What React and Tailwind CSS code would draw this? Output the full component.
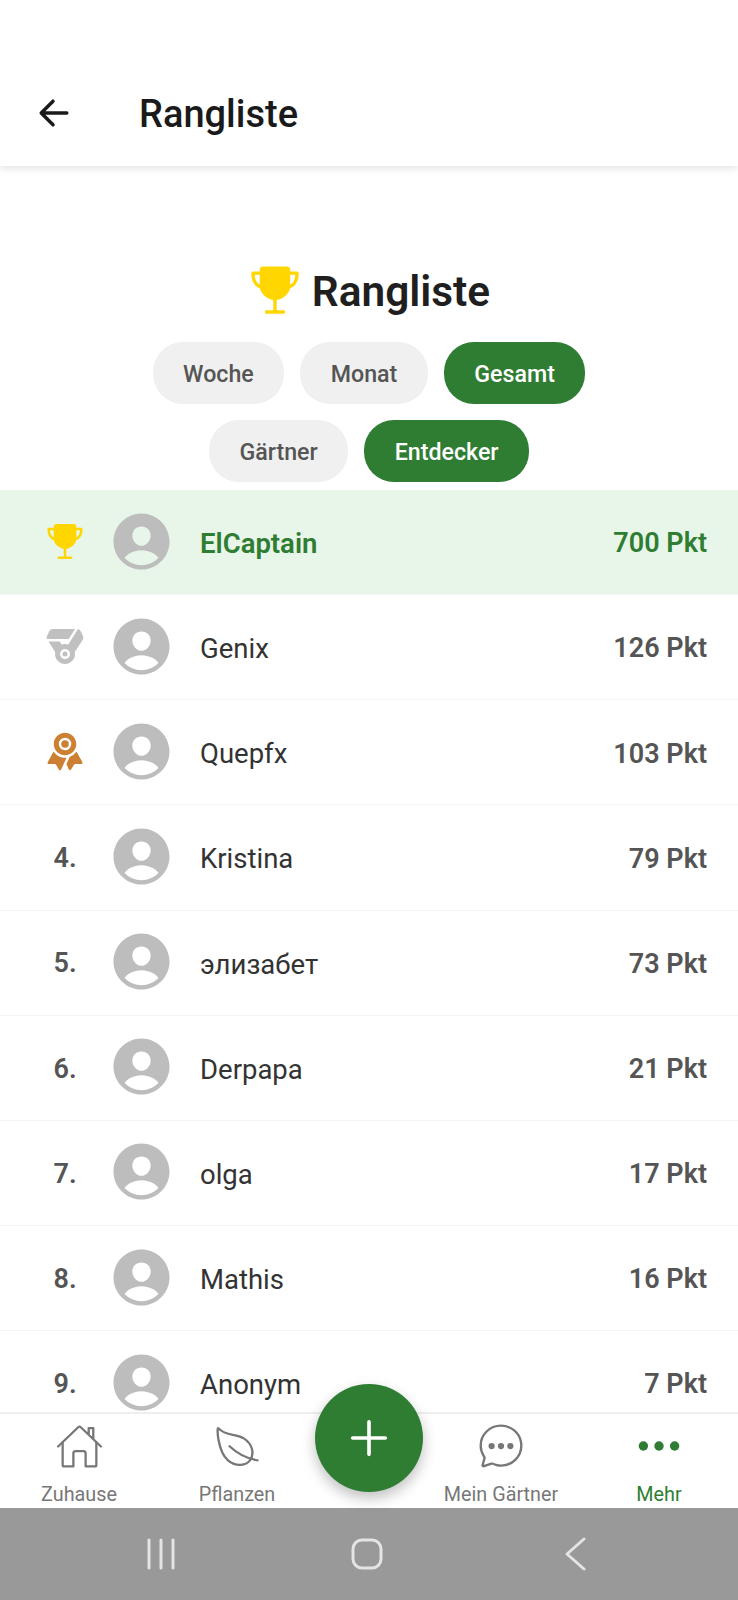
import React from "react";
import {
  IoArrowBack,
  IoTrophy,
  IoMedal,
  IoRibbon,
  IoPersonCircle,
  IoHomeOutline,
  IoLeafOutline,
  IoChatbubbleEllipsesOutline,
  IoEllipsisHorizontal,
  IoAdd,
} from "react-icons/io5";

const players = [
  { rank: 1, name: "ElCaptain", points: 700 },
  { rank: 2, name: "Genix", points: 126 },
  { rank: 3, name: "Quepfx", points: 103 },
  { rank: 4, name: "Kristina", points: 79 },
  { rank: 5, name: "элизабет", points: 73 },
  { rank: 6, name: "Derpapa", points: 21 },
  { rank: 7, name: "olga", points: 17 },
  { rank: 8, name: "Mathis", points: 16 },
  { rank: 9, name: "Anonym", points: 7 },
];

function Pill({ label, active }) {
  return (
    <button
      className={`h-[62px] px-[30.5px] pt-[3px] rounded-[30px] text-[23.2px] font-medium ${
        active ? "bg-[#2e7d32] text-white" : "bg-[#f0f0f0] text-[#555555]"
      }`}
    >
      {label}
    </button>
  );
}

function RankIcon({ rank }) {
  if (rank === 1) return <IoTrophy className="-mt-[2px] text-[#ffd600]" size={43} />;
  if (rank === 2) return <IoMedal className="-mt-[2px] text-[#c0c0c0]" size={43} />;
  if (rank === 3) return <IoRibbon className="-mt-[2px] text-[#cd7f32]" size={43} />;
  return <span className="pt-[2px] text-[27px] font-semibold text-[#555555]">{rank}.</span>;
}

function PlayerRow({ player }) {
  const first = player.rank === 1;
  return (
    <div
      className={`h-[105.15px] shrink-0 flex items-center pl-[45px] pr-[31px] border-b border-[#f3f3f3] ${
        first ? "bg-[#e8f5e9]" : "bg-white"
      }`}
    >
      <div className="w-[40px] flex justify-center">
        <RankIcon rank={player.rank} />
      </div>
      <IoPersonCircle className="ml-[22px] -mt-[2px] shrink-0 text-[#bdbdbd]" size={69} />
      <span
        className={`ml-[24px] flex-1 pt-[3px] text-[27.5px] ${
          first ? "font-semibold text-[#2e7d32]" : "text-[#333333]"
        }`}
      >
        {player.name}
      </span>
      <span className={`pt-[3px] text-[27px] font-semibold ${first ? "text-[#2e7d32]" : "text-[#555555]"}`}>
        {player.points} Pkt
      </span>
    </div>
  );
}

function NavItem({ icon, label, active }) {
  return (
    <div className="flex flex-col items-center">
      <div className="h-[64px] flex items-center justify-center">{icon}</div>
      <span
        className={`mt-[5px] text-[19.8px] leading-[24px] ${active ? "text-[#2e7d32]" : "text-[#777777]"}`}
      >
        {label}
      </span>
    </div>
  );
}

export default function App() {
  return (
    <div className="relative w-[738px] h-[1600px] flex flex-col overflow-hidden bg-white font-['Roboto',sans-serif]">
      <header className="h-[166px] shrink-0 pt-[60px] flex items-center bg-white shadow-[0_2px_8px_rgba(0,0,0,0.12)] z-10">
        <IoArrowBack className="ml-[33px] text-[#1a1a1a] [&_path]:stroke-[42]!" size={42} />
        <h1 className="ml-[64px] pt-[2px] text-[38px] font-medium text-[#1a1a1a]">Rangliste</h1>
      </header>

      <section className="h-[324px] shrink-0 flex flex-col items-center">
        <div className="mt-[97px] h-[50px] flex items-center">
          <IoTrophy className="mt-[4px] text-[#ffd600]" size={54} />
          <h2 className="ml-[10px] pt-[8px] text-[42.4px] font-semibold text-[#1f1f1f]">Rangliste</h2>
        </div>
        <div className="mt-[29px] flex gap-4">
          <Pill label="Woche" />
          <Pill label="Monat" />
          <Pill label="Gesamt" active />
        </div>
        <div className="mt-[16px] flex gap-4">
          <Pill label="Gärtner" />
          <Pill label="Entdecker" active />
        </div>
      </section>

      <div className="flex-1 min-h-0 overflow-hidden flex flex-col">
        {players.map((p) => (
          <PlayerRow key={p.rank} player={p} />
        ))}
      </div>

      <nav className="h-[96px] shrink-0 grid grid-cols-[158px_158px_106px_158px_158px] bg-white border-t-2 border-[#eeeeee] z-10">
        <NavItem icon={<IoHomeOutline className="text-[#777777] [&_path]:stroke-[24]!" size={49} />} label="Zuhause" />
        <NavItem icon={<IoLeafOutline className="text-[#777777] [&_path]:stroke-[24]!" size={49} />} label="Pflanzen" />
        <div />
        <NavItem
          icon={<IoChatbubbleEllipsesOutline className="text-[#777777] [&_path]:stroke-[24]!" size={50} />}
          label="Mein Gärtner"
        />
        <NavItem icon={<IoEllipsisHorizontal className="text-[#2e7d32]" size={50} />} label="Mehr" active />
      </nav>

      <div className="h-[92px] shrink-0 bg-[#999999] flex items-center pl-[146px]">
        <svg width="30" height="32" viewBox="0 0 30 32" fill="none" stroke="#e4e4e4" strokeWidth="3" strokeLinecap="round">
          <path d="M3 2v28M15 2v28M27 2v28" />
        </svg>
        <svg className="ml-[175px]" width="32" height="32" viewBox="0 0 32 32" fill="none" stroke="#e4e4e4" strokeWidth="3">
          <rect x="2" y="2" width="28" height="28" rx="9" />
        </svg>
        <svg className="ml-[181px]" width="22" height="34" viewBox="0 0 22 34" fill="none" stroke="#e4e4e4" strokeWidth="3" strokeLinecap="round" strokeLinejoin="round">
          <path d="M20 2L3 17l17 15" />
        </svg>
      </div>

      <button className="absolute left-[315px] top-[1384px] w-[108px] h-[108px] rounded-full bg-[#2e7d32] text-white flex items-center justify-center shadow-[0_6px_14px_rgba(0,0,0,0.25)] z-20">
        <IoAdd size={58} />
      </button>
    </div>
  );
}
